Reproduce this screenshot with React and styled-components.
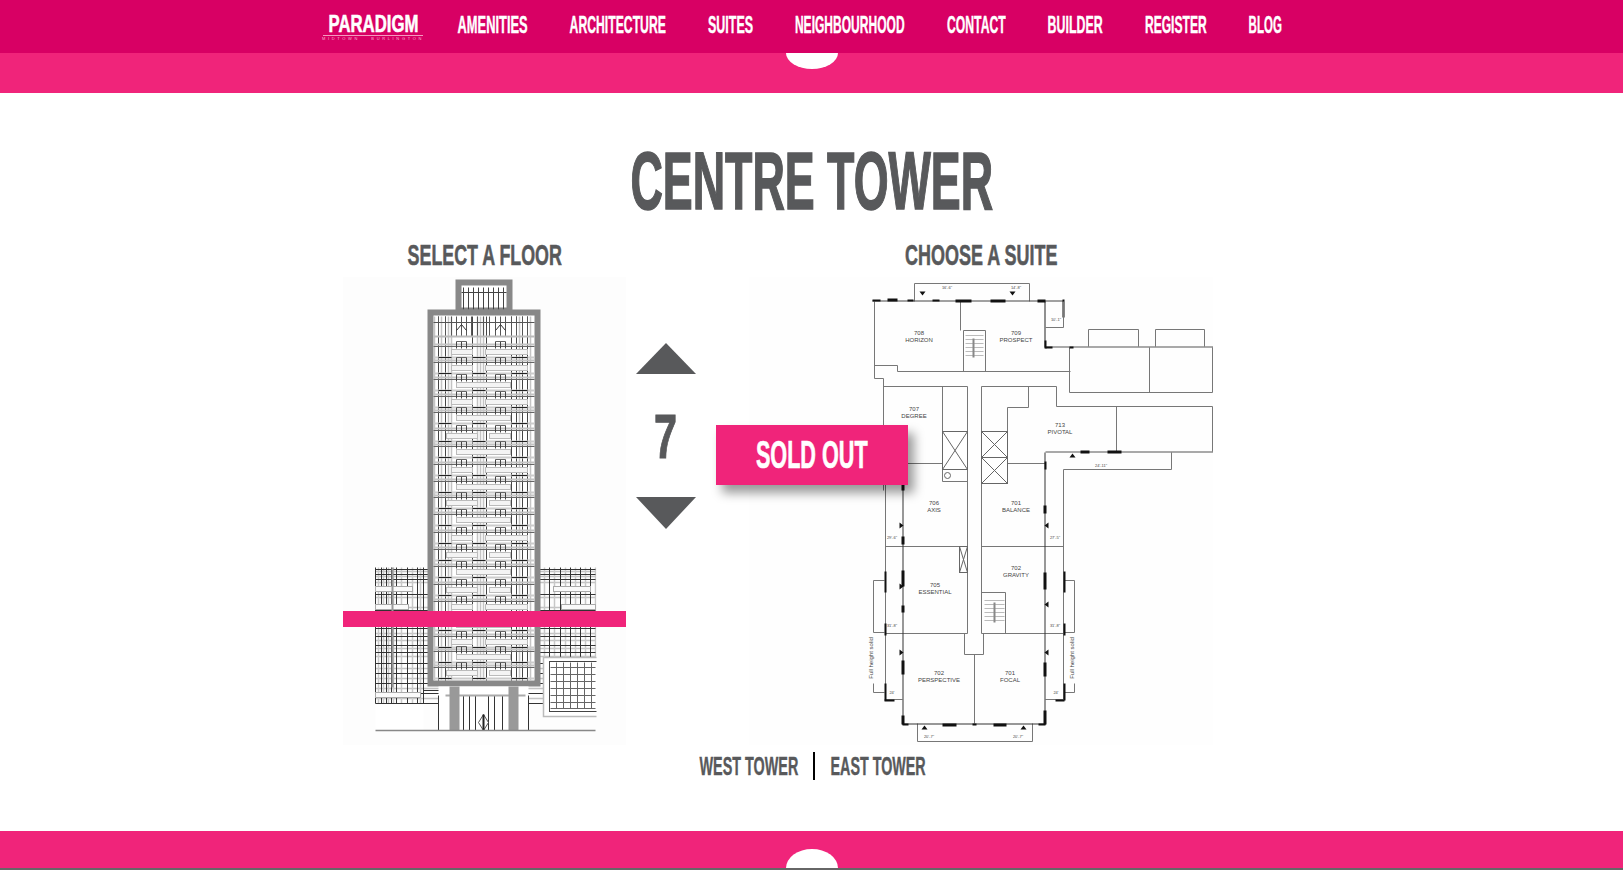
import React, { useLayoutEffect, useRef, useState } from 'react';
import styled, { createGlobalStyle } from 'styled-components';

const GlobalStyle = createGlobalStyle`
    html, body { margin: 0; padding: 0; background: #fff; }
    body { font-family: "Liberation Sans", Arial, sans-serif; overflow: hidden; }
`;

// squeezes a heavy sans into the tall narrow caps of the original headline face
const FitBox = styled.span`
    display: flex;
    justify-content: center;
    flex-shrink: 0;
    width: ${p => p.$w}px;
    white-space: nowrap;
`;
const FitInner = styled.span`
    display: block;
    flex-shrink: 0;
    transform-origin: center;
`;
const Fit = ({ w, children }) => {
    const inner = useRef(null);
    const [scale, setScale] = useState(1);
    useLayoutEffect(() => {
        setScale(w / inner.current.offsetWidth);
    }, [w]);
    return (
        <FitBox $w={w}>
            <FitInner ref={inner} style={{ transform: `scaleX(${scale})` }}>{children}</FitInner>
        </FitBox>
    );
};

const NavBar = styled.nav`
    height: 53px;
    background: #d80064;
    display: flex;
    align-items: center;
    padding-left: 323px;
`;
const Logo = styled.a`
    display: flex;
    flex-direction: column;
    align-items: center;
    width: 100px;
    color: #fff;
    margin: 2px 35px 0 0;
`;
const LogoWord = styled.span`
    font-size: 24px;
    line-height: 19px;
    font-weight: bold;
    -webkit-text-stroke: 0.6px #fff;
`;
const LogoRule = styled.span`
    width: 100%;
    height: 1px;
    margin-top: 2px;
    background: #f59ac0;
`;
const LogoSub = styled.span`
    font-size: 4px;
    line-height: 6px;
    letter-spacing: 2.65px;
    color: #f7b5d0;
    white-space: pre;
`;
const NavItem = styled.a`
    margin: 0 42px 4px 0;
    color: #fff;
    font-size: 23px;
    line-height: 24px;
    font-weight: bold;
    -webkit-text-stroke: 0.4px #fff;
`;
const Band = styled.div`
    position: relative;
    height: ${p => p.$h}px;
    background: #f0247a;
`;
const Notch = styled.div`
    position: absolute;
    left: 786px;
    width: 52px;
    height: ${p => p.$h}px;
    background: #fff;
    ${p => p.$bottom
        ? `bottom: 0; border-radius: 26px 26px 0 0 / ${p.$h}px ${p.$h}px 0 0;`
        : `top: 0; border-radius: 0 0 26px 26px / 0 0 ${p.$h}px ${p.$h}px;`}
`;
const Main = styled.main`
    height: 738px;
    box-sizing: border-box;
    padding-top: 53px;
`;
const Title = styled.h1`
    margin: 0;
    display: flex;
    justify-content: center;
    height: 94px;
    font-size: 81px;
    line-height: 70px;
    font-weight: bold;
    color: #58595b;
    -webkit-text-stroke: 1.5px #58595b;
`;
const Stage = styled.div`
    position: relative;
    width: 937px;
    margin-left: 343px;
    display: flex;
`;
const FloorCol = styled.section`
    width: 283px;
`;
const Heading = styled.h2`
    margin: 0;
    box-sizing: border-box;
    height: 37px;
    padding-bottom: 7px;
    display: flex;
    justify-content: center;
    align-items: center;
    font-size: 30px;
    line-height: 30px;
    font-weight: bold;
    color: #58595b;
    -webkit-text-stroke: 0.6px #58595b;
`;
const Drawing = styled.div`
    position: relative;
    height: 468px;
    background: ${p => p.$tone};
    svg { display: block; }
`;
const FloorBar = styled.div`
    position: absolute;
    left: 0;
    right: 0;
    top: 334px;
    height: 16px;
    background: #f0247a;
`;
const Picker = styled.div`
    width: 61px;
    margin-left: 9px;
    padding-top: 103px;
    display: flex;
    flex-direction: column;
    align-items: center;
`;
const Arrow = styled.button`
    display: block;
    width: 0;
    height: 0;
    padding: 0;
    background: none;
    border-style: solid;
    border-width: ${p => p.$down ? '32px 30.5px 0' : '0 30.5px 31px'};
    border-color: ${p => p.$down ? '#58595b transparent transparent' : 'transparent transparent #58595b'};
`;
const FloorNumber = styled.div`
    height: 123px;
    display: flex;
    align-items: center;
    font-size: 63px;
    line-height: 60px;
    font-weight: bold;
    color: #58595b;
    -webkit-text-stroke: 1px #58595b;
`;
const PlanCol = styled.section`
    width: 464px;
    margin-left: 53px;
`;
const SoldOut = styled.div`
    position: absolute;
    left: 373px;
    top: 185px;
    width: 192px;
    height: 60px;
    display: flex;
    justify-content: center;
    align-items: center;
    background: #f0247a;
    color: #fff;
    font-size: 39px;
    font-weight: bold;
    -webkit-text-stroke: 0.7px #fff;
    box-shadow: 6px 8px 10px rgba(0, 0, 0, 0.4);
`;
const TowerLinks = styled.div`
    display: flex;
    align-items: center;
    height: 28px;
    margin: 7px 0 0 699px;
`;
const TowerLink = styled.a`
    color: #58595b;
    font-size: 25px;
    line-height: 28px;
    font-weight: bold;
    -webkit-text-stroke: 0.4px #58595b;
`;
const Divider = styled.span`
    width: 2px;
    height: 28px;
    margin: 0 16px 0 15px;
    background: #000;
`;
const Footer = styled.footer`
    border-bottom: 2px solid #666;
`;

const Ln = ({ p, c = '#777', w = 1 }) => (
    <polyline points={p} fill="none" stroke={c} strokeWidth={w} />
);

// floors of the tower elevation: y of the slab and which balcony run it carries
const FLOORS = [
    [352, 'a'], [368, 'a'], [385, 'b'], [402, 'a'], [418, 'b'], [436, 'c'], [452, 'b'],
    [470, 'a'], [487, 'b'], [503, 'c'], [520, 'b'], [538, 'a'], [555, 'c'], [572, 'b'],
    [590, 'c'], [607, 'a'], [625, 'b'], [642, 'a'], [657, 'b'], [673, 'c'],
];
const RUNS = {
    a: [[451, 472], [485, 527]],
    b: [[456, 510]],
    c: [[446, 477], [489, 510]],
};
const CORE_DARK = [438, 445, 472, 486, 511, 516, 522, 527];
const CORE_PALE = [434, 441, 448, 451, 477, 480, 483, 519, 530];
const TOP_GRID = [438, 445, 451, 456, 461, 466, 471, 477, 483, 489, 495, 500, 505, 511, 516, 522, 527];
const WING_DARK_Y = [569, 574, 579, 594, 610, 628, 636, 645, 652, 663, 673, 683, 693, 703];
const WING_PALE_Y = [571, 576, 582, 597, 607, 613, 633, 640, 648, 656, 668, 678, 688, 698];
const WING_DARK_X = [375, 381, 386, 391, 396, 407, 417, 423, 549, 560, 570, 580, 590];
const WING_PALE_X = [378, 383, 388, 393, 401, 412, 420, 544, 554, 565, 575, 585, 595];
const WING_WHITE = [[375, 412, 586], [375, 408, 604], [553, 590, 586], [561, 595, 604], [375, 420, 692]];

const TowerDrawing = () => (
    <svg width="283" height="468" viewBox="343 277 283 468">
        <g transform="translate(.5 .5)">
            {/* side wings */}
            {WING_PALE_Y.map(y => <Ln key={y} p={`375,${y} 595,${y}`} c="#c4c4c4" w={1.5} />)}
            {WING_PALE_X.map(x => <Ln key={x} p={`${x},567 ${x},703`} c="#c8c8c8" w={1.5} />)}
            {WING_DARK_Y.map(y => <Ln key={y} p={`375,${y} 595,${y}`} c="#333" />)}
            {WING_DARK_X.map(x => <Ln key={x} p={`${x},567 ${x},703`} c="#333" />)}
            {WING_WHITE.map(([a, b, y]) => (
                <rect key={`${a}-${y}`} x={a} y={y} width={b - a} height="5" fill="#fafafa" stroke="#aaa" />
            ))}
            <rect x="391" y="567" width="2" height="120" fill="#999" />
            <rect x="375" y="704" width="48" height="26" fill="#fff" />
            <Ln p="423,703 423,690 440,690" c="#333" />
            <rect x="543" y="657" width="60" height="59" fill="#fff" stroke="#bbb" strokeWidth="1.5" />
            <rect x="549" y="661" width="60" height="50" fill="none" stroke="#444" />
            {[667, 674, 681, 688, 695, 702, 708].map(y => <Ln key={y} p={`550,${y} 595,${y}`} c="#666" />)}
            {[556, 563, 570, 577, 584, 591].map(x => <Ln key={x} p={`${x},662 ${x},708`} c="#666" />)}
            <rect x="596" y="560" width="30" height="180" fill="#fdfdfd" />

            {/* penthouse */}
            <rect x="458" y="282" width="51" height="28" fill="#fff" stroke="#888" strokeWidth="6" />
            {[463, 468, 473, 478, 483, 488, 493, 498, 503].map(x => (
                <Ln key={x} p={`${x},287 ${x},309`} c="#444" />
            ))}
            <Ln p="461,292 506,292" c="#444" />

            {/* tower shaft */}
            <rect x="430" y="312" width="107" height="371" fill="#fff" stroke="#888" strokeWidth="6" />
            {CORE_PALE.map(x => <Ln key={x} p={`${x},316 ${x},680`} c="#c4c4c4" w={1.5} />)}
            {CORE_DARK.map(x => <Ln key={x} p={`${x},316 ${x},680`} c="#444" />)}
            {TOP_GRID.map(x => <Ln key={x} p={`${x},316 ${x},336`} c="#555" />)}
            <Ln p="456,330 461,324 466,330" c="#333" />
            <Ln p="495,330 500,324 505,330" c="#333" />
            <Ln p="433,322 534,322" c="#555" />
            <Ln p="433,336 534,336" c="#bbb" w={2} />
            {FLOORS.map(([y, kind]) => (
                <g key={y}>
                    <Ln p={`433,${y - 8} 534,${y - 8}`} c="#c4c4c4" w={2} />
                    <Ln p={`433,${y - 6} 534,${y - 6}`} c="#666" />
                    <Ln p={`433,${y + 5} 534,${y + 5}`} c="#ccc" w={2} />
                    <Ln p={`438,${y + 5} 451,${y + 5}`} c="#222" />
                    <Ln p={`472,${y + 5} 485,${y + 5}`} c="#222" />
                    <Ln p={`511,${y + 5} 527,${y + 5}`} c="#222" />
                    {RUNS[kind].map(([a, b]) => (
                        <rect key={a} x={a} y={y - 3} width={b - a} height="5" fill="#f4f4f4" stroke="#bbb" />
                    ))}
                    {[456, 461, 466, 495, 500, 505].map(x => (
                        <Ln key={x} p={`${x},${y - 11} ${x},${y - 4}`} c="#444" />
                    ))}
                    <Ln p={`456,${y - 11} 466,${y - 11}`} c="#666" />
                    <Ln p={`495,${y - 11} 505,${y - 11}`} c="#666" />
                </g>
            ))}

            {/* entrance */}
            <rect x="438" y="686" width="90" height="44" fill="#fff" />
            {[438, 463, 469, 475, 488, 494, 502, 528].map(x => (
                <Ln key={x} p={`${x},695 ${x},730`} c="#333" />
            ))}
            <Ln p="445,695 525,695" c="#aaa" w={2} />
            <rect x="449" y="686" width="10" height="44" fill="#999" />
            <rect x="508" y="686" width="10" height="44" fill="#999" />
            <polygon points="483,714 488,722 483,730 478,722" fill="none" stroke="#555" />
            <rect x="482" y="714" width="2" height="16" fill="#222" />
            <Ln p="375,730 595,730" c="#888" w={1.5} />
        </g>
    </svg>
);

const GREY_LINES = [
    '914,301 914,283 1029,283 1029,301',
    '874,301 874,378 883,378 883,490',
    '874,365 897,365 897,371 1070,371',
    '960,301 960,330',
    '963,371 963,330 985,330 985,371',
    '1088,346 1088,329 1138,329 1138,346',
    '1155,346 1155,329 1204,329 1204,346',
    '1069,347 1069,392 1212,392 1212,347',
    '1149,347 1149,392',
    '883,386 967,386',
    '942,386 942,481 967,481',
    '967,386 967,633',
    '981,386 981,633',
    '981,386 1056,386 1056,406 1212,406 1212,451',
    '1028,386 1028,407 1007,407 1007,483',
    '1116,406 1116,452',
    '902,463 942,463',
    '1007,463 1045,463',
    '1171,452 1171,469 1063,469 1063,699 1045,699',
    '885,470 885,699 902,699',
    '885,546 967,546',
    '981,546 1063,546',
    '885,633 967,633',
    '981,633 1063,633',
    '964,633 964,654 983,654 983,633',
    '974,654 974,723',
    '917,723 917,741 1032,741 1032,723',
    '981,592 1005,592 1005,633',
    '884,580 873,580 873,632 884,632',
    '873,683 873,692 884,692',
    '1064,580 1074,580 1074,632 1064,632',
    '1074,683 1074,692 1064,692',
];

// walls drawn dark; the shorter rects are the heavy black piers along them
const WALLS = [
    [872, 300, 191, 1, '#444'], [1045, 346, 168, 1, '#555'], [1045, 451, 168, 1, '#555'],
    [1044, 301, 1, 46, '#222'], [1044, 452, 1, 272, '#333'], [902, 482, 1, 242, '#333'], [902, 723, 143, 1, '#333'],
    [872, 299, 8, 2], [887, 298, 10, 3], [907, 299, 6, 2], [932, 299, 7, 2], [955, 299, 16, 3], [990, 299, 15, 3],
    [1037, 299, 8, 3], [1062, 299, 2, 18], [1044, 340, 2, 8], [1045, 346, 7, 2], [1069, 346, 4, 2],
    [1080, 450, 9, 3], [1107, 450, 14, 3], [1044, 461, 2, 8], [1043, 505, 3, 8], [1043, 572, 3, 17],
    [1043, 662, 3, 14], [1043, 710, 3, 14], [901, 482, 3, 8], [901, 536, 3, 8], [901, 570, 3, 16], [901, 605, 3, 7],
    [901, 660, 3, 14], [901, 715, 3, 9], [902, 723, 6, 2], [942, 723, 14, 3], [972, 723, 4, 2], [993, 723, 13, 3],
    [1038, 723, 7, 2], [884, 571, 2, 21], [884, 623, 2, 12], [884, 683, 2, 17], [884, 699, 10, 2],
    [1063, 571, 2, 21], [1063, 623, 2, 12], [1063, 683, 2, 17], [1055, 699, 9, 2],
];

const SUITES = [
    ['708', 'HORIZON', 919, 335], ['709', 'PROSPECT', 1016, 335], ['707', 'DEGREE', 914, 411],
    ['713', 'PIVOTAL', 1060, 427], ['706', 'AXIS', 934, 505], ['701', 'BALANCE', 1016, 505],
    ['705', 'ESSENTIAL', 935, 587], ['702', 'GRAVITY', 1016, 570], ['702', 'PERSPECTIVE', 939, 675],
    ['701', 'FOCAL', 1010, 675],
];

const DIMS = [
    ["16'-6\"", 947, 289], ["14'-8\"", 1016, 289], ["10'-1\"", 1056, 321], ["24'-11\"", 1101, 467],
    ["29'-6\"", 892, 539], ["27'-5\"", 1055, 539], ["31'-8\"", 892, 627], ["31'-8\"", 1055, 627],
    ["24'", 892, 694], ["24'", 1056, 694], ["20'-7\"", 929, 738], ["20'-7\"", 1018, 738],
];

const PlanLabel = styled.text`
    font-family: "Liberation Sans", Arial, sans-serif;
    font-size: ${p => p.$size}px;
    fill: #444;
    text-anchor: middle;
`;

const PlanDrawing = () => (
    <svg width="464" height="468" viewBox="749 277 464 468">
        <g transform="translate(.5 .5)">
            {GREY_LINES.map(p => <Ln key={p} p={p} />)}
            {WALLS.map(([x, y, w, h, c]) => (
                <rect key={`${x}-${y}-${w}`} x={x} y={y} width={w} height={h} fill={c || '#111'} />
            ))}
            <Ln p="1045,327 1063,327 1063,301" c="#777" />

            {/* lift shafts */}
            {[[942, 431, 25, 38], [981, 431, 26, 26], [981, 457, 26, 26], [959, 546, 8, 26]].map(([x, y, w, h]) => (
                <g key={`${x}-${y}`}>
                    <rect x={x} y={y} width={w} height={h} fill="#fff" stroke="#666" />
                    <Ln p={`${x},${y} ${x + w},${y + h}`} c="#666" />
                    <Ln p={`${x + w},${y} ${x},${y + h}`} c="#666" />
                </g>
            ))}
            <circle cx="947" cy="475" r="3" fill="none" stroke="#666" />

            {/* stairs */}
            {[335, 339, 343, 347, 351, 355].map(y => <Ln key={y} p={`965,${y} 983,${y}`} c="#bbb" />)}
            {[600, 604, 608, 612, 616, 620].map(y => <Ln key={y} p={`984,${y} 1004,${y}`} c="#bbb" />)}
            <Ln p="973,338 973,357" c="#888" w={2} />
            <Ln p="994,602 994,622" c="#888" w={2} />

            {/* arrows along the walls */}
            <polygon points="919,291 925,291 922,295" fill="#111" />
            <polygon points="1009,291 1015,291 1012,295" fill="#111" />
            <polygon points="1069,457 1075,457 1072,453" fill="#111" />
            {[[901, 525], [901, 586], [901, 652], [1048, 525], [1048, 604], [1048, 652]].map(([x, y]) => (
                <polygon key={`${x}-${y}`} points={x > 1000 ? `${x},${y - 3} ${x},${y + 3} ${x - 4},${y}` : `${x - 2},${y - 3} ${x - 2},${y + 3} ${x + 2},${y}`} fill="#111" />
            ))}
            <polygon points="921,729 927,729 924,725" fill="#111" />
            <polygon points="1020,729 1026,729 1023,725" fill="#111" />
        </g>

        {SUITES.map(([num, name, x, y]) => (
            <g key={name}>
                <PlanLabel x={x} y={y} $size={6}>{num}</PlanLabel>
                <PlanLabel x={x} y={y + 7} $size={6}>{name}</PlanLabel>
            </g>
        ))}
        {DIMS.map(([t, x, y]) => (
            <PlanLabel key={`${x}-${y}`} x={x} y={y} $size={4}>{t}</PlanLabel>
        ))}
        <PlanLabel x={875} y={660} $size={6} transform="rotate(-90 873 660)">Full height solid</PlanLabel>
        <PlanLabel x={1076} y={660} $size={6} transform="rotate(-90 1074 660)">Full height solid</PlanLabel>
    </svg>
);

const NAV = [
    ['AMENITIES', 70], ['ARCHITECTURE', 96], ['SUITES', 45], ['NEIGHBOURHOOD', 110],
    ['CONTACT', 59], ['BUILDER', 55], ['REGISTER', 62], ['BLOG', 33],
];

const App = () => (
    <>
        <GlobalStyle />
        <NavBar>
            <Logo>
                <LogoWord><Fit w={90}>PARADIGM</Fit></LogoWord>
                <LogoRule />
                <LogoSub>MIDTOWN   BURLINGTON</LogoSub>
            </Logo>
            {NAV.map(([label, w]) => (
                <NavItem key={label}><Fit w={w}>{label}</Fit></NavItem>
            ))}
        </NavBar>
        <Band $h={40}><Notch $h={16} /></Band>
        <Main>
            <Title><Fit w={363}>CENTRE TOWER</Fit></Title>
            <Stage>
                <FloorCol>
                    <Heading><Fit w={154}>SELECT A FLOOR</Fit></Heading>
                    <Drawing $tone="#fdfdfd">
                        <TowerDrawing />
                        <FloorBar />
                    </Drawing>
                </FloorCol>
                <Picker>
                    <Arrow aria-label="up" />
                    <FloorNumber><Fit w={23}>7</Fit></FloorNumber>
                    <Arrow $down aria-label="down" />
                </Picker>
                <PlanCol>
                    <Heading><Fit w={152}>CHOOSE A SUITE</Fit></Heading>
                    <Drawing $tone="#fefefe">
                        <PlanDrawing />
                    </Drawing>
                </PlanCol>
                <SoldOut><Fit w={112}>SOLD OUT</Fit></SoldOut>
            </Stage>
            <TowerLinks>
                <TowerLink><Fit w={99}>WEST TOWER</Fit></TowerLink>
                <Divider />
                <TowerLink><Fit w={95}>EAST TOWER</Fit></TowerLink>
            </TowerLinks>
        </Main>
        <Footer>
            <Band $h={37}><Notch $bottom $h={19} /></Band>
        </Footer>
    </>
);

export default App;
